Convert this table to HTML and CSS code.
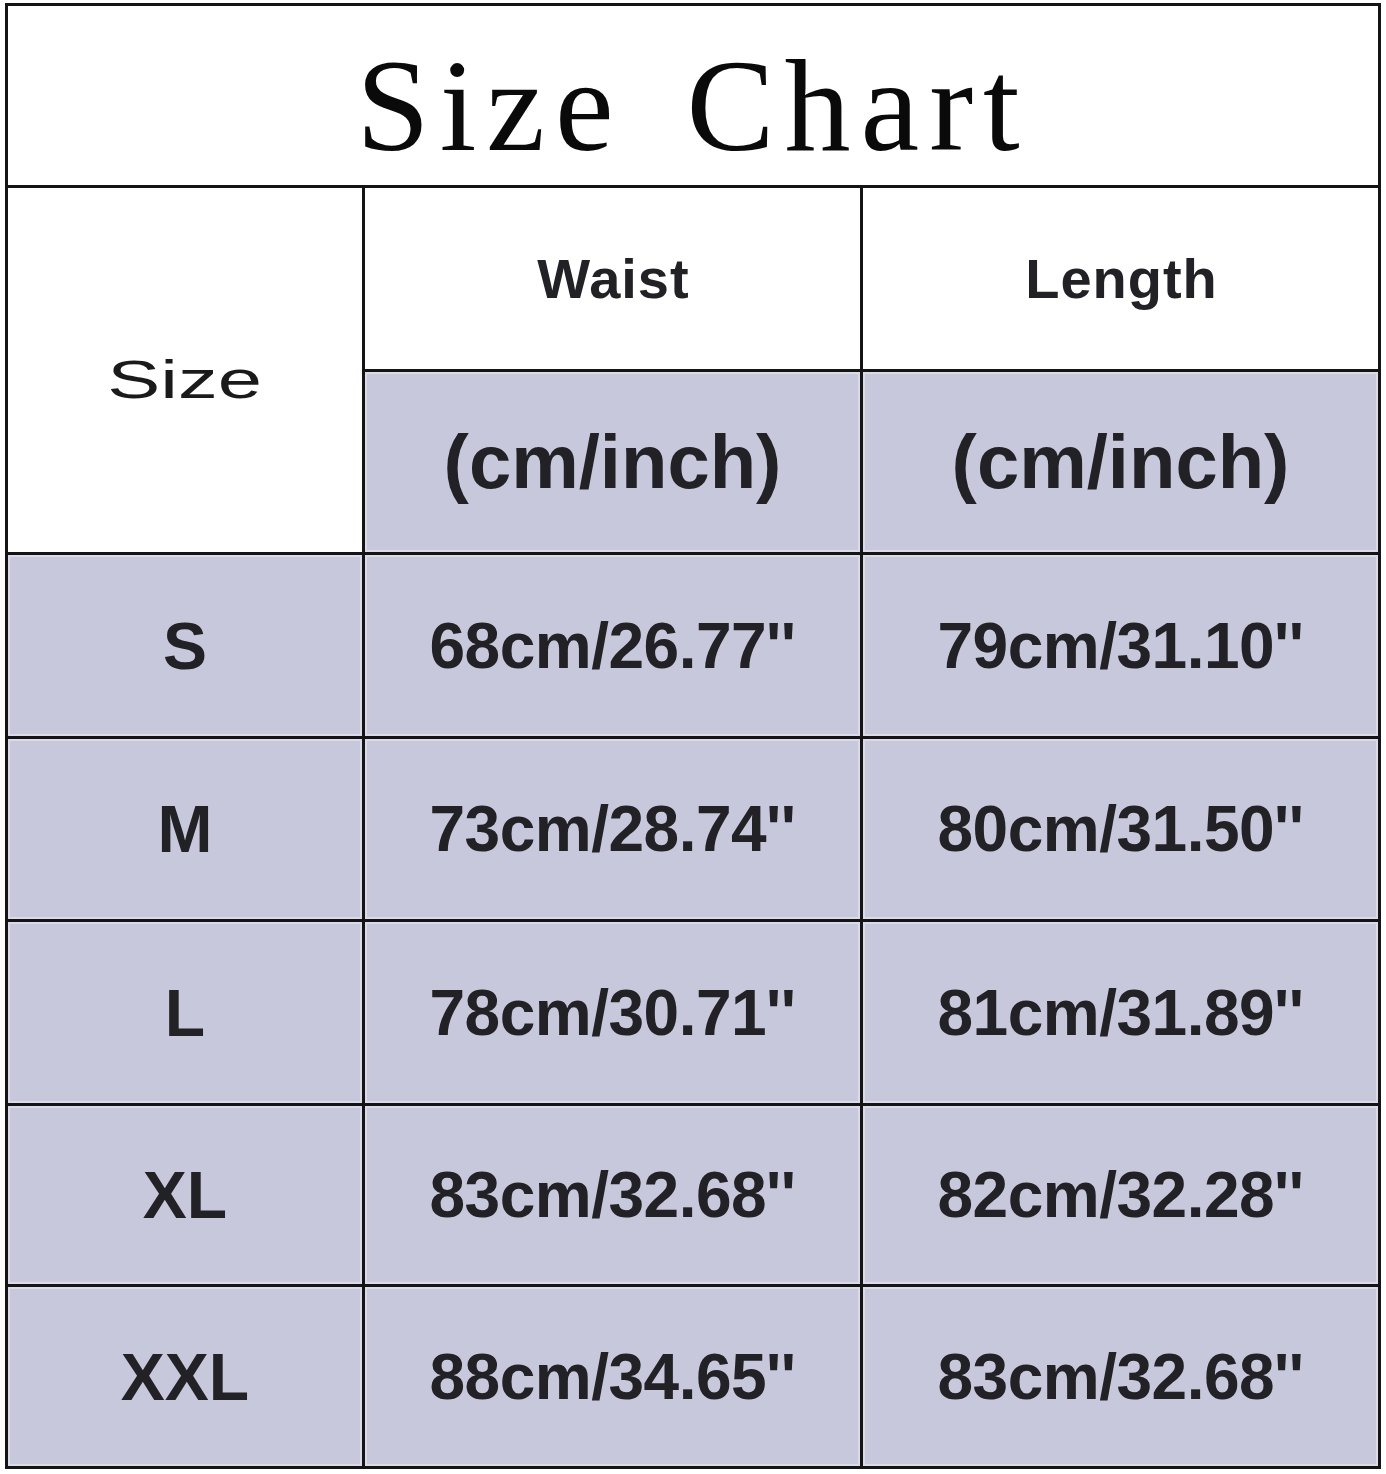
FILE: index.html
```html
<!DOCTYPE html>
<html lang="en">
<head>
<meta charset="utf-8">
<title>Size Chart</title>
<link rel="stylesheet" href="styles.css">
</head>
<body>
<div class="chart">
  <div class="cell title">Size Chart</div>
  <div class="cell size-head"><span class="wide">Size</span></div>
  <div class="cell col-head">Waist</div>
  <div class="cell col-head">Length</div>
  <div class="cell unit">(cm/inch)</div>
  <div class="cell unit">(cm/inch)</div>

  <div class="cell label">S</div>
  <div class="cell value">68cm/26.77''</div>
  <div class="cell value">79cm/31.10''</div>

  <div class="cell label">M</div>
  <div class="cell value">73cm/28.74''</div>
  <div class="cell value">80cm/31.50''</div>

  <div class="cell label">L</div>
  <div class="cell value">78cm/30.71''</div>
  <div class="cell value">81cm/31.89''</div>

  <div class="cell label">XL</div>
  <div class="cell value">83cm/32.68''</div>
  <div class="cell value">82cm/32.28''</div>

  <div class="cell label">XXL</div>
  <div class="cell value">88cm/34.65''</div>
  <div class="cell value">83cm/32.68''</div>
</div>
</body>
</html>
```
FILE: styles.css
```css
html, body {
  margin: 0;
  background: #ffffff;
}

body {
  padding: 3px 0 0 5px;
}

.chart {
  display: grid;
  grid-template-columns: 354px 495px 515px;
  grid-template-rows: 179px 181px 180px 181px 180px 181px 178px 179px;
  gap: 3px;
  padding: 3px;
  width: max-content;
  background: #141414;
  font-family: "Liberation Sans", Arial, sans-serif;
  color: #222226;
}

.cell {
  display: flex;
  align-items: center;
  justify-content: center;
  line-height: 1;
  background: #c8c8dc;
  box-shadow: inset 0 0 0 2px #dadae8;
  white-space: nowrap;
}

.title {
  grid-column: 1 / 4;
  background: #ffffff;
  box-shadow: none;
  font-family: "Liberation Serif", "Times New Roman", serif;
  font-weight: 400;
  font-size: 132px;
  letter-spacing: 10px;
  word-spacing: 20px;
  color: #0a0a0a;
  padding-top: 20px;
  box-sizing: border-box;
}

.size-head {
  grid-row: 2 / 4;
  background: #ffffff;
  box-shadow: none;
  font-size: 53px;
  font-weight: 400;
  color: #1a1a1a;
  padding-top: 18px;
  box-sizing: border-box;
}

.wide {
  display: inline-block;
  transform: scaleX(1.5);
}

.col-head {
  background: #ffffff;
  box-shadow: none;
  font-size: 56px;
  font-weight: 700;
  letter-spacing: 1px;
  padding-left: 2px;
}

.unit {
  font-size: 76px;
  font-weight: 700;
}

.label {
  font-size: 66px;
  font-weight: 700;
}

.value {
  font-size: 64px;
  font-weight: 700;
  letter-spacing: -0.5px;
}
```
